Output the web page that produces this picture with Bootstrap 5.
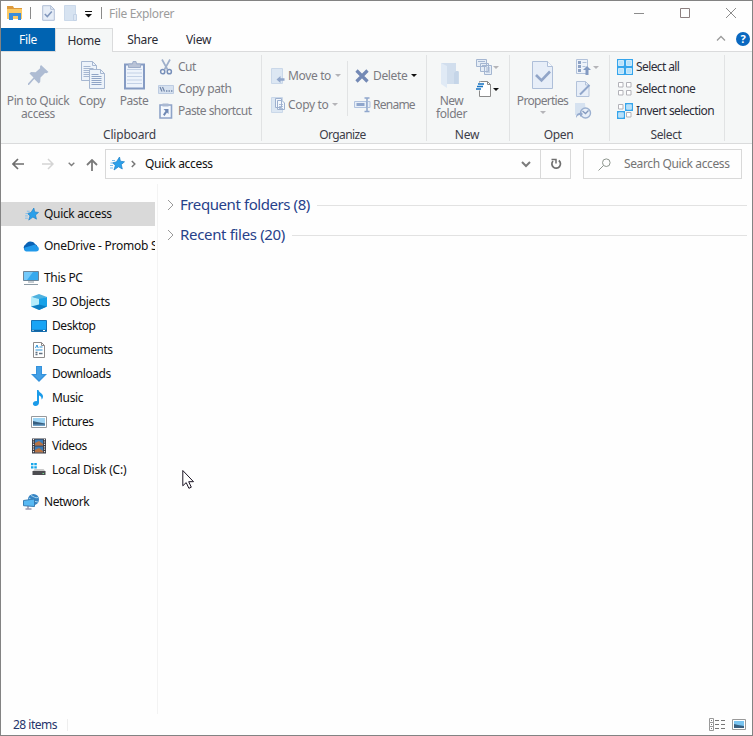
<!DOCTYPE html>
<html lang="en">
<head>
<meta charset="utf-8">
<meta name="viewport" content="width=device-width, initial-scale=1">
<title>File Explorer</title>
<link href="https://cdn.jsdelivr.net/npm/bootstrap@5.3.0/dist/css/bootstrap.min.css" rel="stylesheet">
<style>
body{font:12px/16px "Noto Sans","Open Sans",sans-serif;letter-spacing:-.33px;color:#1b1b1f;background:#fff;overflow:hidden}
.win{width:753px;height:736px;border:1px solid #838383;background:#fefefe}
svg{display:block;flex:none}
.titlebar{height:27px;padding-bottom:3px}
.t-sep{width:1px;height:12px;background:#8a8a8a}
.t-name{color:#9c9c9c}
.winbtn{width:46px;height:22px}
.tabs{height:23px}
.tabs .nav-link{height:23px;padding:0;color:#2b2b35;text-align:center;border-radius:0;line-height:24px;letter-spacing:-.3px}
.tabs .tab-file{width:54px;background:#0063b1;color:#fff}
.tabs .tab-home{width:58px;height:24px;background:#f5f7f7;border:1px solid #dadbdc;border-bottom:0;line-height:23px;z-index:1}
.tabs .tab-home.active{color:#2b2b35}
.ribbon{height:93px;background:#f5f7f7;border-top:1px solid #dadbdc;border-bottom:1px solid #dadbdc}
.rgroup{border-right:1px solid #e1e3e4;height:86px;margin-top:3px}
.rbody{height:72px}
.rlabel{height:16px;line-height:15px;text-align:center;color:#3d3d48;letter-spacing:-.2px}
.big{padding-top:5px;text-align:center;color:#7b7b82;line-height:13px;white-space:nowrap;letter-spacing:-.45px}
.big svg{margin:0 auto 2px}
.cmd{height:22px;color:#7b7b82;white-space:nowrap;letter-spacing:-.55px}
.cmd.tall{height:29px;letter-spacing:-.35px}
.cmd.on{color:#2d2d38}
.caret{width:0;height:0;border:3px solid transparent;border-top-color:#b4b4b8;border-bottom:0}
.caret.dark{border-top-color:#111}
.vline{width:1px;background:#e1e3e4}
.navrow{height:40px}
.addr{width:466px;height:30px;border:1px solid #d9d9d9}
.search{width:159px;height:30px;border:1px solid #d9d9d9;color:#747474}
.reload{width:30px;height:28px;border-left:1px solid #d9d9d9}
.side{width:154px;padding-top:18px}
.side-edge{width:3px;border-right:1px solid #f3f3f3}
.side .node{height:24px;width:154px;overflow:hidden;white-space:nowrap;color:#111}
.side .node svg{margin-right:5px}
.side .sel{background:#d9d9d9}
.top{padding-left:22px}
.sub{padding-left:30px}
.heading{height:30px;font-size:15px;color:#27418a;letter-spacing:-.42px;white-space:nowrap}
.heading span{margin:-3px 0 0 6px}
.rule{height:1px;background:#e2e2e2}
.status{height:21px;color:#27356b;letter-spacing:-.5px}
.pointer{position:absolute;left:182px;top:469px}
</style>
<script src="https://cdn.jsdelivr.net/npm/bootstrap@5.3.0/dist/js/bootstrap.bundle.min.js"></script>
</head>
<body>
<div class="win d-flex flex-column">

<div class="titlebar d-flex align-items-center">
  <svg width="17" height="16" viewBox="0 0 17 16" style="margin-left:5px"><path d="M1 1h6l1 2h8v3H1z" fill="#dd9a3c"/><path d="M1 4h15v10H1z" fill="#fbc964"/><path d="M3 15V8h12v7h-3v-4H7v4z" fill="#3a8ddb"/></svg>
  <div class="t-sep" style="margin-left:7px"></div>
  <svg width="13" height="16" viewBox="0 0 13 16" style="margin-left:11px"><path d="M.7.7h8l3.6 3.6v11H.7z" fill="#e6edf7" stroke="#b1bfd6"/><path d="M8.7.7v3.6h3.6" fill="none" stroke="#b1bfd6"/><path d="M2.800 9l2.500 2.500 4.500-5" fill="none" stroke="#8298bd" stroke-width="1.600"/></svg>
  <svg width="13" height="16" viewBox="0 0 13 16" style="margin-left:9px"><path d="M.5.5h11v15H.5z" fill="#d7e3f1" stroke="#cbd9ea"/><path d="M9.500 9.500h3v6h-3z" fill="#dce6f3" stroke="#c4d3e6"/></svg>
  <svg width="7" height="7" viewBox="0 0 7 7" style="margin:2px 0 0 8px"><path d="M0 .5h7" stroke="#111"/><path d="M0 3h7L3.500 6.500z" fill="#111"/></svg>
  <div class="t-sep" style="margin-left:9px"></div>
  <span class="t-name" style="margin:1px 0 0 7px">File Explorer</span>
  <div class="d-flex ms-auto" style="margin-right:-2px">
    <div class="winbtn d-flex justify-content-center align-items-center"><svg width="10" height="10"><path d="M0 5.500h10" stroke="#8c8c8c"/></svg></div>
    <div class="winbtn d-flex justify-content-center align-items-center"><svg width="10" height="10"><path d="M.5.5h9v9h-9z" fill="none" stroke="#8c8080"/></svg></div>
    <div class="winbtn d-flex justify-content-center align-items-center"><svg width="10" height="10"><path d="M0 0l10 10M10 0L0 10" stroke="#8c8c8c"/></svg></div>
  </div>
</div>

<div class="nav tabs flex-nowrap">
  <a class="nav-link tab-file">File</a>
  <a class="nav-link tab-home active position-relative">Home</a>
  <a class="nav-link" style="width:59px">Share</a>
  <a class="nav-link" style="width:53px">View</a>
  <svg class="ms-auto" width="10" height="7" viewBox="0 0 10 7" style="margin-top:7px"><path d="M1 5.500L5 1.500l4 4" fill="none" stroke="#9b9b9b" stroke-width="1.300"/></svg>
  <svg width="14" height="14" viewBox="0 0 14 14" style="margin:4px 2px 0 10px"><circle cx="7" cy="7" r="7" fill="#0a68c0"/><text x="7" y="11" text-anchor="middle" font-size="11" font-weight="700" fill="#fff" letter-spacing="0">?</text></svg>
</div>

<div class="ribbon d-flex">
  <div class="rgroup" style="width:261px">
    <div class="rbody d-flex" style="padding-left:5px">
      <div class="big" style="width:64px"><svg width="32" height="32" viewBox="0 0 32 32"><path d="M19 5l7.500 7-2 1.200-1.500-.3-4.500 4.500-.3 4.600-1.500 1.500-4.500-4.500L7 25H6v-1.500l5.500-6L7.500 13.500 9 12l4.600.2 4.500-4L18 6.500z" fill="#aebcd3"/></svg>Pin to Quick<br>access</div>
      <div class="big" style="width:44px"><svg width="32" height="32" viewBox="0 0 32 32"><g stroke="#a6b7d1" fill="#edf3fa"><path d="M5.500 1.500h11l4 4v15h-15z"/><path d="M16.500 1.500v4h4M7.500 6.500h7M7.500 8.500h10M7.500 10.500h10M7.500 12.500h10M7.500 14.500h10M7.500 16.500h10" fill="none"/><path d="M13.500 9.500h11l4 4v15h-15z"/><path d="M24.500 9.500v4h4" fill="none"/><path d="M15.500 14.500h7M15.500 16.500h10M15.500 18.500h10M15.500 20.500h10M15.500 22.500h10M15.500 24.500h10" fill="none" stroke="#8fa4c6"/></g></svg>Copy</div>
      <div class="big" style="width:40px"><svg width="32" height="32" viewBox="0 0 32 32"><path d="M7 4.500h19v24H7z" fill="#edf3fb" stroke="#859bc3" stroke-width="2"/><path d="M9 9.500h15M9 13h15M9 16.500h15M9 20h15M9 23.500h15" stroke="#c3d1e6"/><path d="M10.500 7.500V4h4l.5-2.500h3L18.500 4h4v3.500z" fill="#b9c3d6" stroke="#9dadc9"/></svg>Paste</div>
      <div style="padding:1px 0 0 4px">
        <div class="cmd d-flex align-items-center"><svg width="16" height="16" viewBox="0 0 16 16" class="me-1"><path d="M4 .5l5.500 10M12 .5l-5.500 10" stroke="#9fb0cb" stroke-width="1.700"/><circle cx="4.700" cy="12.700" r="2.100" fill="none" stroke="#7890ba" stroke-width="1.500"/><circle cx="11.300" cy="12.700" r="2.100" fill="none" stroke="#7890ba" stroke-width="1.500"/></svg><span>Cut</span></div>
        <div class="cmd d-flex align-items-center"><svg width="16" height="16" viewBox="0 0 16 16" class="me-1"><path d="M.5 4.500h15v8H.5z" fill="#d7e2f0" stroke="#bdcce2"/><path d="M2 6l2 4.500M4.500 6l2 4.500" stroke="#7085a8" stroke-width="1.200"/><path d="M8 10h1.400M10.500 10h1.400M13 10h1.400" stroke="#7085a8" stroke-width="1.300"/></svg><span style="letter-spacing:-.4px">Copy path</span></div>
        <div class="cmd d-flex align-items-center"><svg width="16" height="16" viewBox="0 0 16 16" class="me-1"><path d="M2 2h11.500v13H2z" fill="#f4f8fd" stroke="#8ea3c8" stroke-width="1.600"/><path d="M4.500.5h6v3h-6z" fill="#aab9d2"/><path d="M5.500 6h5v5L9 9.500 6.500 13 5 11.500 7.500 8z" fill="#7089b5"/></svg><span>Paste shortcut</span></div>
      </div>
    </div>
    <div class="rlabel" style="padding-right:3px">Clipboard</div>
  </div>

  <div class="rgroup" style="width:165px">
    <div class="rbody d-flex" style="padding:6px 0 0 9px">
      <div style="width:76px">
        <div class="cmd tall d-flex align-items-center"><svg width="17" height="16" viewBox="0 0 17 16"><path d="M.5.500h11v15H.500z" fill="#dce7f3" stroke="#cad8e9"/><path d="M5.500 11.500L9.500 8v2.200h4v2.600h-4V15z" fill="#91a7cb"/></svg><span>Move to</span><i class="caret ms-1"></i></div>
        <div class="cmd tall d-flex align-items-center"><svg width="17" height="16" viewBox="0 0 17 16"><path d="M.5.500h11v15H.500z" fill="#dce7f3" stroke="#cad8e9"/><path d="M4.500 1.500h6v9h-6zM6.500 3.500h4.500l2.500 2.500v6.500h-7z" fill="#f3f7fc" stroke="#9db0cf"/><path d="M8 7.500h4M8 9.500h4M8 11.500h4" stroke="#9db0cf" stroke-width=".8"/></svg><span>Copy to</span><i class="caret ms-1"></i></div>
      </div>
      <div class="vline" style="height:55px"></div>
      <div style="padding-left:6px">
        <div class="cmd tall d-flex align-items-center"><svg width="19" height="16" viewBox="0 0 19 16"><path d="M2.500 2.500l11 11M13.500 2.500l-11 11" stroke="#7389b5" stroke-width="3.200"/></svg><span>Delete</span><i class="caret dark ms-1"></i></div>
        <div class="cmd tall d-flex align-items-center"><svg width="19" height="16" viewBox="0 0 19 16"><path d="M.5 4.500h12v6H.5zM14 4.500h2v6h-2" fill="#e8eff8" stroke="#b1c3df"/><path d="M2.500 6h8v3h-8z" fill="#8fa6cc"/><path d="M10.500 1h5M10.500 14.500h5M13 1v13.500" stroke="#8fa6cc" stroke-width="1.500"/></svg><span style="letter-spacing:-.75px">Rename</span></div>
      </div>
    </div>
    <div class="rlabel" style="padding-right:3px;letter-spacing:-.6px">Organize</div>
  </div>

  <div class="rgroup" style="width:83px">
    <div class="rbody d-flex">
      <div class="big" style="width:49px"><svg width="32" height="32" viewBox="0 0 32 32" style="position:relative;left:-2px"><path d="M7 3h15v8l3 1v12H10z" fill="#d1deed"/><path d="M7 3l6 3v22l-6-4z" fill="#e0eaf5"/><path d="M22 11h2.500v13H20V13z" fill="#c5d5e8"/></svg>New<br>folder</div>
      <div style="padding:1px 0 0">
        <div class="cmd d-flex align-items-center"><svg width="17" height="16" viewBox="0 0 17 16"><g fill="#e5edf6" stroke="#a4b6d1"><path d="M.5.5h10v7H.5zM4.500 4.500h8v8h-8zM8.500 6.500h7v9h-7z"/></g><path d="M2 2.500h7M6 6.500h5M10 9h4M10 11h4M10 13h4" stroke="#a4b6d1"/></svg><i class="caret"></i></div>
        <div class="cmd d-flex align-items-center"><svg width="17" height="16" viewBox="0 0 17 16"><path d="M4.500.5h7l3 3v12h-11V.5z" fill="#fff" stroke="#8a8a8a"/><path d="M11.500.5v3h3" fill="none" stroke="#8a8a8a"/><path d="M2 3h6M1 5.500h6M0 8h5" stroke="#f5f7f7" stroke-width="3"/><path d="M2 3h6M1 5.500h6M0 8h5" stroke="#1673c4" stroke-width="1.300"/></svg><i class="caret dark"></i></div>
      </div>
    </div>
    <div class="rlabel" style="padding-right:2px">New</div>
  </div>

  <div class="rgroup" style="width:100px">
    <div class="rbody d-flex">
      <div class="big" style="width:65px"><svg width="32" height="32" viewBox="0 0 32 32"><path d="M5.500 1.500h15l5 5v22h-20z" fill="#e7eef8" stroke="#aebfd9"/><path d="M20.500 1.500v5h5" fill="#f7fafd" stroke="#aebfd9"/><path d="M9 15l5.500 5.500L23 11.500" fill="none" stroke="#91a5c8" stroke-width="2.600"/></svg><span style="letter-spacing:-.7px">Properties</span><i class="caret d-block mx-auto" style="margin-top:4px"></i></div>
      <div style="padding:1px 0 0 1px">
        <div class="cmd d-flex align-items-center"><svg width="17" height="16" viewBox="0 0 17 16"><path d="M.5.5h11v14H.5z" fill="#eef3fa" stroke="#b2c2da"/><path d="M2 2h3v3H2zM2 6h3v3H2zM2 10h3v3H2z" fill="#8da2c4"/><path d="M6.500 3.500h4M6.500 7.500h3" stroke="#b2c2da"/><path d="M11 7l4 4h-2.500v5h-3v-5H7z" fill="#829ac2"/></svg><i class="caret"></i></div>
        <div class="cmd d-flex align-items-center"><svg width="17" height="16" viewBox="0 0 17 16"><path d="M.5.5h9l3.500 3.500v11.500H.5z" fill="#e7eef8" stroke="#b2c2da"/><path d="M9.500.5V4H13" fill="none" stroke="#b2c2da"/><path d="M4 13.500L13.500 4" stroke="#90a6ca" stroke-width="2"/></svg></div>
        <div class="cmd d-flex align-items-center"><svg width="17" height="16" viewBox="0 0 17 16" style="margin-left:-1px"><path d="M0 0h10l1 12H0z" fill="#d6e2f0"/><circle cx="10.500" cy="10" r="5" fill="#e8eff8" stroke="#9bb0d0" stroke-width="1.400"/><path d="M7.500 8l3 2.500 3-3" fill="none" stroke="#8399bd" stroke-width="1.300"/><path d="M1 15c0-4 2-5 4-5v-2l3 3-3 3v-2c-2 0-3 1-4 3z" fill="#94aacd"/></svg></div>
      </div>
    </div>
    <div class="rlabel" style="padding-right:2px;letter-spacing:-.4px">Open</div>
  </div>

  <div class="rgroup" style="width:115px">
    <div class="rbody" style="padding:1px 0 0 7px">
      <div class="cmd on d-flex align-items-center"><svg width="19" height="16" viewBox="0 0 19 16"><path d="M0 0h16v16H0z" fill="#35a5ec"/><g fill="#b9e2fa" stroke="#e4f4fd" stroke-width=".8"><path d="M1.500 1.500h5v5h-5zM9.500 1.500h5v5h-5zM1.500 9.500h5v5h-5zM9.500 9.500h5v5h-5z"/></g></svg><span style="letter-spacing:-.6px">Select all</span></div>
      <div class="cmd on d-flex align-items-center"><svg width="19" height="16" viewBox="0 0 19 16"><path d="M1.500 1.500h4.500v4.500H1.500zM9.500 1.500h4.500v4.500H9.500zM1.500 9.500h4.500v4.500H1.500zM9.500 9.500h4.500v4.500H9.500z" fill="#fff" stroke="#b2b2b8"/></svg><span>Select none</span></div>
      <div class="cmd on d-flex align-items-center"><svg width="19" height="16" viewBox="0 0 19 16"><path d="M1.500 1.500h4.500v4.500H1.500zM9.500 9.500h4.500v4.500H9.500z" fill="#fff" stroke="#b2b2b8"/><path d="M8.700.7h6.600v6.600H8.700zM.7 8.700h6.600v6.600H.7z" fill="#fff" stroke="#35a5ec" stroke-width="1.400"/><path d="M10 2h4v4h-4zM2 10h4v4H2z" fill="#b7e0fa"/></svg><span>Invert selection</span></div>
    </div>
    <div class="rlabel" style="padding-right:2px;letter-spacing:-.4px">Select</div>
  </div>
</div>

<div class="navrow d-flex align-items-center">
  <svg width="12" height="12" viewBox="0 0 12 12" style="margin-left:11px"><path d="M12 6H1.500M6 1L1 6l5 5" fill="none" stroke="#6e6e6e" stroke-width="1.700"/></svg>
  <svg width="12" height="12" viewBox="0 0 12 12" style="margin-left:18px"><path d="M0 6h10.500M6 1l5 5-5 5" fill="none" stroke="#d4d4d4" stroke-width="1.500"/></svg>
  <svg width="7" height="5" viewBox="0 0 7 5" style="margin-left:14px"><path d="M.7.7l2.800 2.800L6.300.7" fill="none" stroke="#7d7d7d" stroke-width="1.400"/></svg>
  <svg width="12" height="12" viewBox="0 0 12 12" style="margin:2px 0 0 11px"><path d="M6 12V1.500M1 6l5-5 5 5" fill="none" stroke="#7a7a7a" stroke-width="1.800"/></svg>
  <div class="addr d-flex align-items-center" style="margin-left:7px">
    <svg width="15" height="14" viewBox="0 0 15 14" style="margin-left:4px"><path d="M9.500 0l.9 4.200 4.100.6-3.200 2.700 1 4.500-3.800-2.200-4.500 3.200 1.300-4.500-2.600-2.700 3.700-.9z" fill="#2ba0ea" stroke="#1a80c9" stroke-width=".7"/><path d="M2 3.500h3M.5 6h2.500M0 8.500h3M0 11h3" stroke="#7fbdec"/></svg>
    <svg width="5" height="8" viewBox="0 0 5 8" style="margin-left:6px"><path d="M.8 1l3 3-3 3" fill="none" stroke="#777" stroke-width="1.500"/></svg>
    <span style="margin-left:9px;color:#111">Quick access</span>
    <svg class="ms-auto" width="10" height="7" viewBox="0 0 10 7" style="margin-right:9px"><path d="M1 1l4 4 4-4" fill="none" stroke="#7b7b7b" stroke-width="2"/></svg>
    <div class="reload d-flex align-items-center justify-content-center"><svg width="12" height="12" viewBox="0 0 12 12"><path d="M8.800 2.500A4.300 4.300 0 1 1 3 3" fill="none" stroke="#6f6f6f" stroke-width="1.700"/><path d="M1.500 1.500h4.500v4" fill="none" stroke="#6f6f6f" stroke-width="1.500"/></svg></div>
  </div>
  <div class="search d-flex align-items-center" style="margin-left:12px">
    <svg width="13" height="13" viewBox="0 0 13 13" style="margin-left:14px"><circle cx="8.300" cy="4.700" r="3.800" fill="none" stroke="#8d958d"/><path d="M5.500 7.500L.5 12.500" stroke="#8d958d"/></svg>
    <span style="margin-left:13px;letter-spacing:-.38px">Search Quick access</span>
  </div>
</div>

<div class="d-flex flex-grow-1">
  <div class="side">
    <div class="node sel d-flex align-items-center" style="padding-left:24px"><svg width="14" height="13" viewBox="0 0 15 14"><path d="M9.500 0l.9 4.200 4.100.6-3.200 2.700 1 4.500-3.800-2.200-4.500 3.200 1.300-4.500-2.600-2.700 3.700-.9z" fill="#2ba0ea" stroke="#1a80c9" stroke-width=".7"/><path d="M2 3.500h3M.5 6h2.500M0 8.500h3M0 11h3" stroke="#7fbdec"/></svg>Quick access</div>
    <div class="node top d-flex align-items-center mt-2"><svg width="16" height="16" viewBox="0 0 16 16"><path d="M3.500 13A3.500 3.500 0 0 1 2.500 6.500 5.500 5.500 0 0 1 12 6a4 4 0 0 1 1 7z" fill="#0a62b5"/><path d="M3.500 13.500C1 13.500.5 10.500 2 9.500L9 7.500c2-1 4-1 4.500.8 3 .2 3.500 5-.5 5.200z" fill="#2199ea"/></svg><span style="letter-spacing:-.25px">OneDrive - Promob S</span></div>
    <div class="node top d-flex align-items-center mt-2"><svg width="16" height="16" viewBox="0 0 16 16"><path d="M.5 1.500h15v9H.5z" fill="#36a9ee" stroke="#6d8497"/><path d="M1 2h9l-6 8H1z" fill="#73c9fa"/><path d="M5 12h6M1 14.500h14" stroke="#8b9aa5"/></svg>This PC</div>
    <div class="node sub d-flex align-items-center"><svg width="16" height="16" viewBox="0 0 16 16"><path d="M0 3l8-3 8 3-8 3z" fill="#50b2df"/><path d="M0 3l8 2v11l-8-3.500z" fill="#b5edfb"/><path d="M16 3L8 5v11l8-3.500z" fill="#18a2e8"/><path d="M0 12.500l8-2 8 2L8 16z" fill="#0c7fc4"/></svg>3D Objects</div>
    <div class="node sub d-flex align-items-center"><svg width="16" height="16" viewBox="0 0 16 16"><path d="M.5 2.500h15v11H.5z" fill="#18a4f5" stroke="#1772b4"/><path d="M0 12.500h16" stroke="#1263a0" stroke-width="1.500"/><path d="M1.500 12.500h1M12 12.500h2" stroke="#fff"/></svg><span style="letter-spacing:-.45px">Desktop</span></div>
    <div class="node sub d-flex align-items-center"><svg width="16" height="16" viewBox="0 0 16 16"><path d="M2.500.5h8l3 3v12h-11z" fill="#fff" stroke="#8e8b8b"/><path d="M10.500.5v3h3" fill="none" stroke="#8e8b8b"/><path d="M4.500 6L6 3l1.200 3M8.500 5h3M4.500 8h7" fill="none" stroke="#2c93d7"/><path d="M4.500 10.500h2M4.500 12.500h2M8 11.500h3.500" stroke="#607080" stroke-width="1.500"/></svg><span style="letter-spacing:-.45px">Documents</span></div>
    <div class="node sub d-flex align-items-center"><svg width="16" height="16" viewBox="0 0 16 16"><path d="M5 0h6v8h5l-8 8-8-8h5z" fill="#3492dc"/><path d="M6 1h4v8h3l-5 5-5-5h3z" fill="#45a0e5"/></svg><span style="letter-spacing:-.45px">Downloads</span></div>
    <div class="node sub d-flex align-items-center"><svg width="16" height="16" viewBox="0 0 16 16"><path d="M6 0h1.500c.5 3 4.500 3 4.500 6.500 0 1.500-.8 2.500-1.500 3 .3-2-.7-3.500-2.500-4V12.500C8 14.500 6.500 16 4.500 16S1.500 14.500 2 13c.5-1.500 2.500-2.300 4-1.800z" fill="#1b9be9"/></svg>Music</div>
    <div class="node sub d-flex align-items-center"><svg width="16" height="16" viewBox="0 0 16 16"><path d="M.5 2.500h15v11H.5z" fill="#fff" stroke="#96999c"/><path d="M2 4h12v8H2z" fill="#9ed5f5"/><path d="M2 7l4 1 8 1.500V12H2z" fill="#385f80"/><path d="M2 10.500h12V12H2z" fill="#6d9fc5"/></svg><span style="letter-spacing:-.45px">Pictures</span></div>
    <div class="node sub d-flex align-items-center"><svg width="16" height="16" viewBox="0 0 16 16"><path d="M1 .5h14v15H1z" fill="#3a3a42"/><path d="M4 1.500h8v6H4zM4 8.500h8v6H4z" fill="#3a7dbb"/><path d="M4 5l4-2 4 3v1.500H4zM4 12l4-2 4 3v1.500H4z" fill="#b87343"/><path d="M2.500 1v14M13.500 1v14" stroke="#e8e8e8" stroke-width="1.200" stroke-dasharray="1.200 1.200"/></svg><span style="letter-spacing:-.45px">Videos</span></div>
    <div class="node sub d-flex align-items-center"><svg width="16" height="16" viewBox="0 0 16 16"><path d="M0 1h2.500v2.300H0zM3.300 1h2.500v2.300H3.300zM0 4.200h2.500v2.300H0zM3.300 4.200h2.500v2.300H3.300z" fill="#18a6ea"/><path d="M3.500 7h9l2 2.500H1.800z" fill="#c9c9c9"/><path d="M1.500 9h13v4h-13z" fill="#4c4c50"/><path d="M11.500 11.500h1.500" stroke="#75e08d"/></svg><span style="letter-spacing:-.2px">Local Disk (C:)</span></div>
    <div class="node top d-flex align-items-center mt-2"><svg width="16" height="16" viewBox="0 0 16 16"><circle cx="10.500" cy="5.500" r="5.500" fill="#3684c4"/><path d="M8 1.500c3 1 4 3 7 2M6 4l4 3 5 1" stroke="#a5d4ee" fill="none"/><path d="M.5 6.500l11-1.500v7.500l-11-.8z" fill="#58b9f3" stroke="#397fb5"/><path d="M5 12v2.500M2.500 15h6" stroke="#668" stroke-width="1"/></svg><span style="letter-spacing:-.45px">Network</span></div>
  </div>
  <div class="side-edge"></div>
  <div class="flex-grow-1" style="padding:6px 5px 0 9px">
    <div class="heading d-flex align-items-center"><svg width="7" height="10" viewBox="0 0 7 10"><path d="M1 0l5 5-5 5" fill="none" stroke="#999"/></svg><span>Frequent folders (8)</span><div class="rule flex-grow-1" style="margin-left:7px"></div></div>
    <div class="heading d-flex align-items-center"><svg width="7" height="10" viewBox="0 0 7 10"><path d="M1 0l5 5-5 5" fill="none" stroke="#999"/></svg><span style="letter-spacing:-.33px">Recent files (20)</span><div class="rule flex-grow-1" style="margin-left:7px"></div></div>
  </div>
</div>

<div class="status d-flex align-items-center">
  <span style="margin-left:12px">28 items</span>
  <div class="vline" style="height:12px;margin-left:10px;background:#eee"></div>
  <svg class="ms-auto" width="17" height="14" viewBox="0 0 17 14"><path d="M.5.5h4v4h-4zM.5 4.500h4v4h-4zM.5 8.500h4v4h-4z" fill="#fff" stroke="#999"/><path d="M2 2.500h1M2 6.500h1M2 10.500h1M6 2.500h4M12 2.500h4M6 6.500h4M12 6.500h4M6 10.500h4M12 10.500h4" stroke="#777"/></svg>
  <svg width="14" height="12" viewBox="0 0 14 12" style="margin:0 6px 0 6px"><path d="M.5.5h13v10H.5z" fill="#fff" stroke="#999"/><path d="M2 2h10v7H2z" fill="#79c4f0"/><path d="M2 5l4 1 6 1v2H2z" fill="#385f80"/></svg>
</div>
</div>
<svg class="pointer" width="13" height="21" viewBox="0 0 13 21"><path d="M.8 1.500v15.300l3.400-3.200 2.700 5.700 2.400-1.100-2.600-5.500h4.800z" fill="#fff" stroke="#1b1424"/></svg>
</body>
</html>
